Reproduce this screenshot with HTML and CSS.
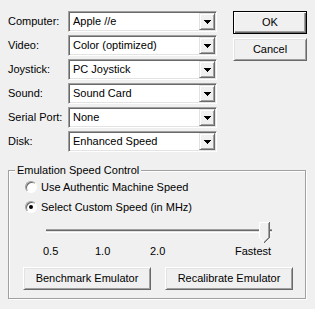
FILE: index.html
```html
<!DOCTYPE html>
<html lang="en">
  <head>
    <meta charset="utf-8">
    <link rel="stylesheet" href="styles.css">
  </head>
  <body>
    <div class="dialog">
      <div class="top">
        <div class="fields">
          <div class="row"><span class="lbl">Computer:</span><div class="combo"><span class="val">Apple //e</span><span class="drop"><svg width="7" height="4" shape-rendering="crispEdges"><path d="M0 0h7v1H0zM1 1h5v1H1zM2 2h3v1H2zM3 3h1v1H3z"/></svg></span></div></div>
          <div class="row"><span class="lbl">Video:</span><div class="combo"><span class="val">Color (optimized)</span><span class="drop"><svg width="7" height="4" shape-rendering="crispEdges"><path d="M0 0h7v1H0zM1 1h5v1H1zM2 2h3v1H2zM3 3h1v1H3z"/></svg></span></div></div>
          <div class="row"><span class="lbl">Joystick:</span><div class="combo"><span class="val">PC Joystick</span><span class="drop"><svg width="7" height="4" shape-rendering="crispEdges"><path d="M0 0h7v1H0zM1 1h5v1H1zM2 2h3v1H2zM3 3h1v1H3z"/></svg></span></div></div>
          <div class="row extra"><span class="lbl">Sound:</span><div class="combo"><span class="val">Sound Card</span><span class="drop"><svg width="7" height="4" shape-rendering="crispEdges"><path d="M0 0h7v1H0zM1 1h5v1H1zM2 2h3v1H2zM3 3h1v1H3z"/></svg></span></div></div>
          <div class="row"><span class="lbl">Serial Port:</span><div class="combo"><span class="val">None</span><span class="drop"><svg width="7" height="4" shape-rendering="crispEdges"><path d="M0 0h7v1H0zM1 1h5v1H1zM2 2h3v1H2zM3 3h1v1H3z"/></svg></span></div></div>
          <div class="row"><span class="lbl">Disk:</span><div class="combo"><span class="val">Enhanced Speed</span><span class="drop"><svg width="7" height="4" shape-rendering="crispEdges"><path d="M0 0h7v1H0zM1 1h5v1H1zM2 2h3v1H2zM3 3h1v1H3z"/></svg></span></div></div>
        </div>
        <div class="buttons">
          <div class="btn default">OK</div>
          <div class="btn">Cancel</div>
        </div>
      </div>

      <fieldset class="group">
        <legend>Emulation Speed Control</legend>
        <div class="radio"><span class="circle"></span>Use Authentic Machine Speed</div>
        <div class="radio"><span class="circle on"></span>Select Custom Speed (in MHz)</div>
        <div class="slider">
          <div class="track"></div>
          <svg class="thumb" width="11" height="21" shape-rendering="crispEdges">
            <path fill="#f0f0f0" d="M1 1h8v15H1zM2 16h6v1H2zM3 17h4v1H3zM4 18h2v1H4z"/>
            <path fill="#fff" d="M0 0h10v1H0zM0 1h1v15H0zM1 16h1v1H1zM2 17h1v1H2zM3 18h1v1H3zM4 19h1v1H4z"/>
            <path fill="#a0a0a0" d="M9 1h1v15H9zM8 16h1v1H8zM7 17h1v1H7zM6 18h1v1H6zM5 19h1v1H5z"/>
            <path fill="#696969" d="M10 0h1v16h-1zM9 16h1v1H9zM8 17h1v1H8zM7 18h1v1H7zM6 19h1v1H6zM5 20h1v1H5z"/>
          </svg>
        </div>
        <div class="scale">
          <span class="s1">0.5</span><span class="s2">1.0</span><span class="s3">2.0</span><span>Fastest</span>
        </div>
        <div class="actions">
          <div class="btn wide">Benchmark Emulator</div>
          <div class="btn wide">Recalibrate Emulator</div>
        </div>
      </fieldset>
    </div>
  </body>
</html>
```

FILE: styles.css
```css
body {
  margin: 0;
  background: #f0f0f0;
  font-family: "Liberation Sans", Arial, sans-serif;
  font-size: 11px;
  line-height: 13px;
  color: #000;
}
.dialog {
  width: 315px;
  height: 309px;
}
.top {
  display: flex;
  padding: 11px 0 0 8px;
}
.fields {
  width: 209px;
}
.row {
  display: flex;
  align-items: center;
  height: 21px;
  margin-bottom: 3px;
}
.row.extra {
  margin-top: 1px;
}
.row:last-child {
  margin-bottom: 0;
}
.lbl {
  width: 60px;
}
.combo {
  box-sizing: border-box;
  width: 149px;
  height: 21px;
  display: flex;
  align-items: center;
  background: #fff;
  border: 1px solid;
  border-color: #a0a0a0 #fff #fff #a0a0a0;
  box-shadow: inset 1px 1px #696969, inset -1px -1px #e3e3e3;
  padding: 1px;
}
.val {
  flex: 1;
  padding-left: 3px;
}
.drop {
  box-sizing: border-box;
  width: 16px;
  height: 17px;
  display: flex;
  align-items: center;
  justify-content: center;
  background: #f0f0f0;
  border: 1px solid;
  border-color: #e3e3e3 #696969 #696969 #e3e3e3;
  box-shadow: inset 1px 1px #fff, inset -1px -1px #a0a0a0;
}
.buttons {
  margin-left: 16px;
  width: 74px;
  display: flex;
  flex-direction: column;
  gap: 4px;
}
.btn {
  box-sizing: border-box;
  height: 23px;
  display: flex;
  align-items: center;
  justify-content: center;
  background: #f0f0f0;
  border: 1px solid;
  border-color: #fff #696969 #696969 #fff;
  box-shadow: inset 1px 1px #e3e3e3, inset -1px -1px #a0a0a0;
}
.btn.default {
  border-color: #000;
  box-shadow: inset 1px 1px #fff, inset -1px -1px #696969, inset -2px -2px #a0a0a0;
}
.group {
  box-sizing: border-box;
  width: 298px;
  margin: 12px 0 0 8px;
  padding: 0 0 8px 0;
  border: 1px solid #a0a0a0;
  box-shadow: inset 1px 1px #fff, 1px 1px #fff;
}
.group legend {
  margin-left: 6px;
  padding: 0 2px;
  line-height: 13px;
  background: #f0f0f0;
}
.radio {
  display: flex;
  align-items: center;
  height: 20px;
  padding-left: 16px;
}
.circle {
  box-sizing: border-box;
  width: 12px;
  height: 12px;
  margin-right: 4px;
  border-radius: 50%;
  background: #fff;
  border: 1px solid;
  border-color: #a0a0a0 #fff #fff #a0a0a0;
  box-shadow: inset 1px 1px #696969;
  display: flex;
  align-items: center;
  justify-content: center;
}
.circle.on::after {
  content: "";
  width: 4px;
  height: 4px;
  border-radius: 50%;
  background: #000;
}
.slider {
  position: relative;
  width: 226px;
  height: 28px;
  margin-left: 37px;
}
.track {
  position: relative;
  top: 12px;
  height: 2px;
  border-top: 1px solid #a0a0a0;
  border-bottom: 1px solid #fff;
  background: #e3e3e3;
  box-shadow: inset 0 1px #696969;
}
.thumb {
  position: absolute;
  left: 213px;
  top: 5px;
}
.scale {
  display: flex;
  padding-left: 34px;
  height: 13px;
}
.scale span {
  display: inline-block;
}
.scale .s1 { width: 52px; }
.scale .s2 { width: 55px; }
.scale .s3 { width: 85px; }
.actions {
  display: flex;
  gap: 14px;
  margin-top: 9px;
  padding-left: 14px;
}
.btn.wide {
  width: 128px;
}
```
